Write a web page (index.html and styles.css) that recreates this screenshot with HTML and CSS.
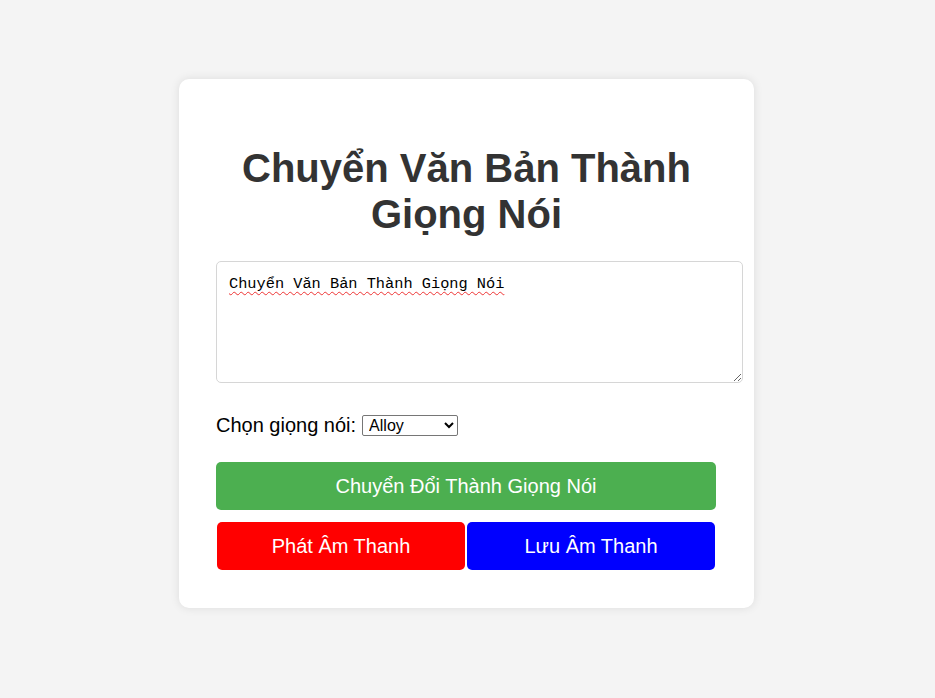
FILE: index.html
```html
<!DOCTYPE html>
<html lang="vi">
<head>
<meta charset="utf-8">
<title>Chuyển Văn Bản Thành Giọng Nói</title>
<link rel="stylesheet" href="styles.css">
</head>
<body>
<div class="card">
  <h1 class="title">Chuyển Văn Bản Thành Giọng Nói</h1>
  <textarea class="text-input" spellcheck="true">Chuyển Văn Bản Thành Giọng Nói</textarea>
  <div class="voice-row">
    <label class="voice-label" for="voice">Chọn giọng nói:</label>
    <select id="voice" class="voice-select">
      <option>Alloy</option>
      <option>Echo</option>
      <option>Fable</option>
    </select>
  </div>
  <button class="btn btn-convert">Chuyển Đổi Thành Giọng Nói</button>
  <div class="btn-row">
    <button class="btn btn-play">Phát Âm Thanh</button>
    <button class="btn btn-save">Lưu Âm Thanh</button>
  </div>
</div>
</body>
</html>
```

FILE: styles.css
```css
html, body {
  margin: 0;
  padding: 0;
}
body {
  background: #f4f4f4;
  font-family: "Liberation Sans", Arial, sans-serif;
  color: #000;
  min-height: 698px;
}
.card {
  box-sizing: border-box;
  width: 575px;
  margin: 79px 0 0 179px;
  padding: 66px 37px 38px 37px;
  background: #fff;
  border-radius: 10px;
  box-shadow: 0 0 10px rgba(0, 0, 0, 0.1);
}
.title {
  margin: 0 0 24px 0;
  font-size: 40px;
  font-weight: bold;
  line-height: 46px;
  color: #333;
  text-align: center;
}
.text-input {
  display: block;
  box-sizing: border-box;
  width: 527px;
  height: 122px;
  margin: 0;
  padding: 12px 12px;
  border: 1px solid #d6d6d6;
  border-radius: 5px;
  font-family: "Liberation Mono", "DejaVu Sans Mono", monospace;
  font-size: 15.3px;
  line-height: 20px;
  color: #000;
  resize: both;
  text-decoration: underline wavy #e33;
  text-decoration-thickness: 1px;
  text-underline-offset: 3px;
}
.voice-row {
  display: flex;
  align-items: center;
  margin-top: 31px;
  height: 23px;
}
.voice-label {
  font-size: 20px;
  margin-right: 6px;
}
.voice-select {
  box-sizing: border-box;
  width: 96px;
  height: 21px;
  font-family: "Liberation Sans", Arial, sans-serif;
  font-size: 16px;
  padding: 0 2px;
  border: 1px solid #767676;
  border-radius: 2px;
  background: #fff;
  color: #000;
}
.btn {
  box-sizing: border-box;
  height: 48px;
  border: none;
  border-radius: 5px;
  color: #fff;
  font-family: "Liberation Sans", Arial, sans-serif;
  font-size: 20px;
  cursor: pointer;
}
.btn-convert {
  display: block;
  width: 500px;
  margin-top: 25px;
  background: #4caf50;
}
.btn-row {
  display: flex;
  gap: 2px;
  width: 500px;
  padding: 0 1px;
  box-sizing: border-box;
  margin-top: 12px;
}
.btn-play,
.btn-save {
  flex: 1;
}
.btn-play {
  background: #ff0000;
}
.btn-save {
  background: #0000ff;
}
```
